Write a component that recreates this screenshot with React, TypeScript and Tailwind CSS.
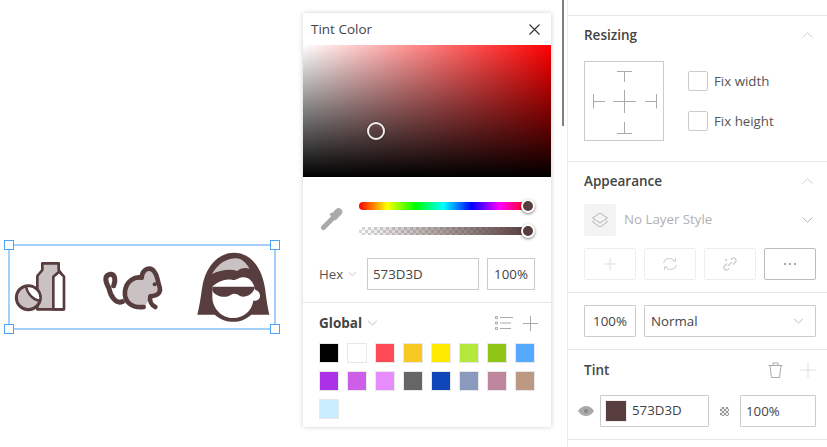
import React from "react";

const swatches = [
  "bg-[#000000]", "bg-[#ffffff]", "bg-[#ff4b55]", "bg-[#f8c822]", "bg-[#ffe900]", "bg-[#b5e83d]", "bg-[#8fc514]", "bg-[#55aaff]",
  "bg-[#ac30e6]", "bg-[#cc5ee8]", "bg-[#e68cff]", "bg-[#666666]", "bg-[#0f47bb]", "bg-[#8a9abd]", "bg-[#bd869d]", "bg-[#bb9983]",
  "bg-[#c9eeff]",
];

const Chevron = ({ up = false, className = "" }: { up?: boolean; className?: string }) => (
  <svg width="11" height="6" viewBox="0 0 11 6" className={className} fill="none" stroke="#b4b4b4" strokeWidth="1">
    <path d={up ? "M.5 5.5L5.5.8l5 4.7" : "M.5.5l5 4.7 5-4.7"} />
  </svg>
);

const Handle = ({ className }: { className: string }) => (
  <div className={`absolute w-[10px] h-[10px] bg-white border border-[#4da3f5] ${className}`} />
);

const Canvas = () => (
  <div className="relative w-[303px] h-full shrink-0">
    <div className="absolute left-[8px] top-[244px] w-[268px] h-[86px] border-2 border-[#a3d1fb]" />
    <Handle className="left-[4px] top-[240px]" />
    <Handle className="left-[270px] top-[240px]" />
    <Handle className="left-[4px] top-[324px]" />
    <Handle className="left-[270px] top-[324px]" />
    <svg className="absolute left-0 top-[240px]" width="100" height="90" viewBox="0 0 300 270">
      <path d="M127 70H176V90L190 110V208H112V108L127 90Z" fill="#cac2c2" stroke="#573d3d" strokeWidth="8" strokeLinejoin="round" />
      <path d="M160 208V110L177 95L192 110V208Z" fill="#fff" stroke="#573d3d" strokeWidth="8" strokeLinejoin="round" />
      <circle cx="85" cy="173" r="36" fill="#cac2c2" stroke="#573d3d" strokeWidth="9" />
      <path d="M78 139A36 36 0 0 1 120 183C100 180 82 162 78 139Z" fill="#fff" stroke="#573d3d" strokeWidth="7" strokeLinejoin="round" />
    </svg>
    <svg className="absolute left-[95px] top-[245px]" width="90" height="80" viewBox="0 0 270 240">
      <path d="M92 170C85 125 110 98 140 98C142 72 165 62 178 80C188 92 186 102 192 120C198 138 190 150 166 154L150 186C120 190 100 185 92 170Z" fill="#cac2c2" />
      <path d="M146 186C112 190 86 172 90 138C94 110 118 93 140 98C142 72 165 62 178 80C188 92 186 102 192 120C200 140 192 152 166 154C162 168 170 180 181 186" fill="none" stroke="#573d3d" strokeWidth="14" strokeLinecap="round" strokeLinejoin="round" />
      <path d="M82 170C62 178 46 152 42 130C32 112 26 92 44 88C62 86 62 108 56 122" fill="none" stroke="#573d3d" strokeWidth="15" strokeLinecap="round" strokeLinejoin="round" />
      <circle cx="179" cy="118" r="6" fill="#573d3d" />
    </svg>
    <svg className="absolute left-[190px] top-[240px]" width="90" height="90" viewBox="0 0 270 270">
      <path d="M22 224C28 200 32 175 36 145C45 80 85 38 132 38C180 38 215 80 225 145C229 175 232 200 238 224H184C165 240 150 245 130 245C110 245 92 240 74 224Z" fill="#573d3d" />
      <path d="M66 102C85 70 110 55 138 55C155 55 170 70 178 86C165 82 150 85 142 93C118 85 88 92 66 102Z" fill="#cac2c2" />
      <path d="M67 140C85 125 105 115 128 120C138 122 146 112 160 112C178 112 190 125 196 150C206 152 213 163 209 173C204 183 195 182 190 182C186 212 160 234 130 234C95 234 67 205 67 170Z" fill="#fff" />
      <path d="M67 140H195C192 162 165 175 150 168C140 160 130 160 122 165C105 176 78 170 67 152Z" fill="#573d3d" />
    </svg>
  </div>
);

const Popover = () => (
  <div className="w-[248px] h-[414px] mt-[13px] shrink-0 bg-white shadow-[0_0_5px_rgba(0,0,0,0.2)] flex flex-col">
    <div className="h-[32px] flex items-center justify-between pl-[8px] pr-[11px] text-[13.5px] text-[#444]">
      <span className="pt-[1px]">Tint Color</span>
      <svg width="11" height="11" viewBox="0 0 11 11" stroke="#333" strokeWidth="1.1"><path d="M.5.5l10 10M10.500.5l-10 10" /></svg>
    </div>
    <div className="relative h-[132px] bg-[linear-gradient(to_right,#fff,#f00)]">
      <div className="h-full bg-[linear-gradient(to_bottom,transparent,#000)]" />
      <div className="absolute left-[64px] top-[77px] w-[18px] h-[18px] rounded-full border-2 border-[#eee] shadow-[0_0_2px_rgba(0,0,0,0.6)]" />
    </div>
    <div className="flex items-center pl-[16px] pt-[25px]">
      <svg width="24" height="24" viewBox="0 0 24 24" className="shrink-0" fill="none" stroke="#aaa" strokeLinecap="round">
        <path d="M4.500 20.500L13.500 11.500" strokeWidth="5" />
        <path d="M16 8.500L19.500 5" strokeWidth="7.500" />
        <path d="M11.500 6.500L17.500 12.500" strokeWidth="3" strokeLinecap="butt" />
      </svg>
      <div className="ml-[16px] w-[169px] flex flex-col gap-[17px]">
        <div className="relative h-[8px] rounded-full bg-[linear-gradient(to_right,#f00,#ff0,#0f0,#0ff,#00f,#f0f,#f00)]">
          <div className="absolute right-[-7px] top-[-3px] w-[14px] h-[14px] rounded-full bg-[#573d3d] border-2 border-white shadow-[0_1px_3px_rgba(0,0,0,0.5)]" />
        </div>
        <div className="relative h-[8px] rounded-full bg-[repeating-conic-gradient(#d8d8d8_0_25%,#ffffff_0_50%)] bg-[length:6px_6px]">
          <div className="h-full rounded-full bg-[linear-gradient(to_right,transparent,#573d3d)]" />
          <div className="absolute right-[-7px] top-[-3px] w-[14px] h-[14px] rounded-full bg-[#573d3d] border-2 border-white shadow-[0_1px_3px_rgba(0,0,0,0.5)]" />
        </div>
      </div>
    </div>
    <div className="flex items-center mt-[23px] pl-[16px]">
      <span className="text-[13.3px] text-[#555] w-[26px] pt-[1px]">Hex</span>
      <Chevron className="ml-[2px] scale-75" />
      <div className="ml-[9px] w-[112px] h-[32px] border border-[#ccc] flex items-center pl-[5px] pt-[1px] text-[13.3px] text-[#444]">573D3D</div>
      <div className="ml-[8px] w-[48px] h-[32px] border border-[#ccc] flex items-center justify-center pt-[1px] text-[13.3px] text-[#444]">100%</div>
    </div>
    <div className="h-px bg-[#e6e6e6] mt-[12px]" />
    <div className="flex items-center justify-between pl-[16px] pr-[13px] mt-[10px] h-[20px]">
      <div className="flex items-center gap-[5px]">
        <span className="text-[13.5px] font-bold text-[#444]">Global</span>
        <Chevron className="scale-90" />
      </div>
      <div className="flex items-center gap-[10px]">
        <svg width="18" height="14" viewBox="0 0 18 14" fill="none" stroke="#aaa">
          <path d="M.5.5h2v2h-2zM.5 6h2v2h-2zM.5 11.500h2v2h-2zM5 1.500h13M5 7h11M5 12.500h11" />
        </svg>
        <svg width="15" height="15" viewBox="0 0 15 15" stroke="#aaa"><path d="M7.500 0v15M0 7.500h15" /></svg>
      </div>
    </div>
    <div className="grid grid-cols-[repeat(8,20px)] gap-[8px] pl-[16px] mt-[10px]">
      {swatches.map((c) => (
        <div key={c} className={`h-[20px] border border-[#e8e8e8] ${c}`} />
      ))}
    </div>
  </div>
);

const Head = ({ title, className = "" }: { title: string; className?: string }) => (
  <div className={`flex items-center justify-between h-[20px] mt-[9px] ${className}`}>
    <span className="text-[13.5px] font-semibold text-[#444]">{title}</span>
    <Chevron up className="opacity-60" />
  </div>
);

const Check = ({ label }: { label: string }) => (
  <div className="h-[20px] flex items-center gap-[6px]">
    <div className="w-[20px] h-[20px] border border-[#ccc] rounded-[2px]" />
    <span className="text-[13.3px] text-[#555] pt-[1px]">{label}</span>
  </div>
);

const ActionBtn = ({ children, on = false }: { children: React.ReactNode; on?: boolean }) => (
  <div className={`w-[52px] h-[32px] rounded-[2px] border flex items-center justify-center ${on ? "border-[#bbb]" : "border-[#eee]"}`}>
    {children}
  </div>
);

const Panel = () => (
  <div className="flex-1 ml-[3px] h-full border-l border-[#ececec] flex flex-col">
    <div className="h-[16px] border-b border-[#e6e6e6] shrink-0" />
    <div className="h-[146px] border-b border-[#e6e6e6] pl-[16px] shrink-0">
      <Head title="Resizing" className="pr-[14px]" />
      <div className="flex mt-[16px]">
        <div className="w-[80px] h-[80px] border border-[#ccc]">
          <svg width="78" height="78" viewBox="0 0 78 78" fill="none" stroke="#aaa" className="block">
            <path d="M32 9.500h15M39.500 9.500V20M28 39.500h23M39.500 28v23M8.500 32v14.500M8.500 39.500H20M71.500 32v14.500M60 39.500h11.500M39.500 60v11M32 71.500h15" />
          </svg>
        </div>
        <div className="ml-[24px] mt-[10px] flex flex-col gap-[20px]">
          <Check label="Fix width" />
          <Check label="Fix height" />
        </div>
      </div>
    </div>
    <div className="h-[131px] border-b border-[#e6e6e6] pl-[16px] pr-[11px] shrink-0">
      <Head title="Appearance" className="pr-[3px]" />
      <div className="flex items-center mt-[13px] pr-[3px]">
        <div className="w-[32px] h-[32px] bg-[#f3f3f3] rounded-[2px] flex items-center justify-center">
          <svg width="18" height="18" viewBox="0 0 18 18" fill="none" stroke="#b4b4b4">
            <path d="M9 2l7.500 5L9 12 1.500 7z" />
            <path d="M3 9.500l-1.500 1.500L9 16l7.500-5L15 9.500" />
          </svg>
        </div>
        <span className="ml-[8px] flex-1 text-[13.3px] text-[#b0b0b0]">No Layer Style</span>
        <Chevron />
      </div>
      <div className="flex gap-[8px] mt-[12px]">
        <ActionBtn>
          <svg width="12" height="12" viewBox="0 0 12 12" stroke="#ddd"><path d="M6 0v12M0 6h12" /></svg>
        </ActionBtn>
        <ActionBtn>
          <svg width="16" height="14" viewBox="0 0 16 14" fill="none" stroke="#ccc"><path d="M1.500 6a6 5.500 0 0 1 11-2M14.500 8a6 5.500 0 0 1-11 2M10.500 4h3V1M5.500 10h-3v3" /></svg>
        </ActionBtn>
        <ActionBtn>
          <svg width="14" height="14" viewBox="0 0 14 14" fill="none" stroke="#ccc" strokeWidth="1.300"><path d="M8 2.500l1-1a2.500 2.500 0 0 1 3.500 3.500l-2.500 2.500M6 11.500l-1 1A2.500 2.500 0 0 1 1.500 9L4 6.500M5 9l4-4M2 2l2 2" /></svg>
        </ActionBtn>
        <ActionBtn on>
          <svg width="12" height="2" viewBox="0 0 12 2" fill="#aaa"><path d="M0 0h2v2H0zM5 0h2v2H5zM10 0h2v2h-2z" /></svg>
        </ActionBtn>
      </div>
    </div>
    <div className="h-[57px] border-b border-[#e6e6e6] pl-[16px] pr-[11px] flex items-center gap-[8px] shrink-0">
      <div className="w-[52px] h-[32px] border border-[#ccc] rounded-[1px] flex items-center justify-center pt-[1px] text-[13.3px] text-[#444]">100%</div>
      <div className="flex-1 h-[32px] border border-[#ccc] rounded-[1px] flex items-center justify-between pl-[6px] pr-[11px] text-[13.3px] text-[#444]">
        <span className="pt-[1px]">Normal</span>
        <Chevron className="scale-90" />
      </div>
    </div>
    <div className="h-[90px] border-b border-[#e6e6e6] pl-[10px] pr-[11px] shrink-0">
      <div className="flex items-center justify-between pl-[6px] mt-[10px] h-[20px]">
        <span className="text-[13.5px] font-semibold text-[#444]">Tint</span>
        <div className="flex items-center gap-[17px]">
          <svg width="15" height="16" viewBox="0 0 15 16" fill="none" stroke="#aaa"><path d="M.5 3.500h14M5 3.500V1h5v2.500M2 3.500l1.500 12h8l1.500-12" /></svg>
          <svg width="16" height="16" viewBox="0 0 16 16" stroke="#ddd"><path d="M8 0v16M0 8h16" /></svg>
        </div>
      </div>
      <div className="flex items-center mt-[15px]">
        <svg width="16" height="10" viewBox="0 0 16 10" fill="#aaa"><path d="M0 5c2-3.300 5-5 8-5s6 1.700 8 5c-2 3.300-5 5-8 5S2 8.300 0 5z" /><circle cx="8" cy="5" r="2" fill="#888" /></svg>
        <div className="ml-[6px] w-[109px] h-[32px] border border-[#ccc] rounded-[1px] flex items-center pl-[4px] gap-[5px] text-[13.3px] text-[#444]">
          <div className="w-[22px] h-[22px] bg-[#573d3d] border border-[#eee]" />
          <span>573D3D</span>
        </div>
        <div className="ml-[11px] w-[9px] h-[9px] bg-[repeating-conic-gradient(#999_0_25%,#eee_0_50%)] bg-[length:4px_4px]" />
        <div className="ml-[11px] flex-1 h-[32px] border border-[#ccc] rounded-[1px] flex items-center pl-[5px] pt-[1px] text-[13.3px] text-[#444]">100%</div>
      </div>
    </div>
  </div>
);

export default function App() {
  return (
    <div className="w-[827px] h-[447px] overflow-hidden bg-white flex font-['Open_Sans',sans-serif]">
      <Canvas />
      <Popover />
      <div className="ml-[11px] w-[2px] h-[126px] bg-[#808080] shrink-0" />
      <Panel />
    </div>
  );
}
